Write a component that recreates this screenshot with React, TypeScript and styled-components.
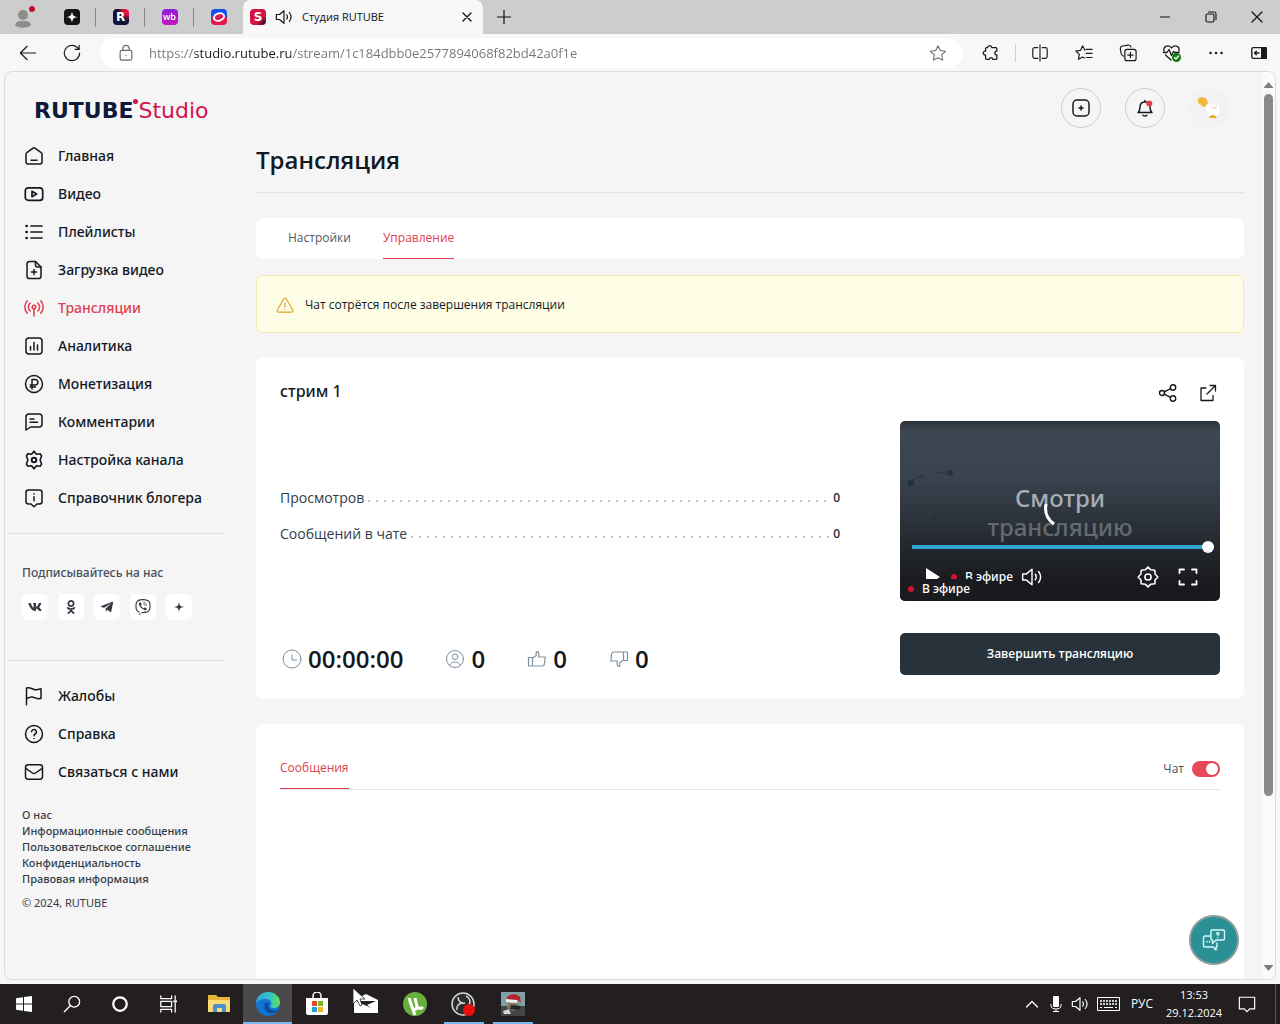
import React from "react";
import styled, { createGlobalStyle, css } from "styled-components";
import { FaVk, FaOdnoklassniki, FaTelegramPlane, FaViber } from "react-icons/fa";

const ui = `"Open Sans", "Noto Sans", sans-serif`;
const medium = `"Noto Sans", "Open Sans", sans-serif`;

const Global = createGlobalStyle`
  * { box-sizing: border-box; }
  body { margin: 0; font-family: ${ui}; color: #14191f; }
  button { border: 0; padding: 0; background: none; font: inherit; color: inherit; cursor: pointer; }
  a { color: inherit; text-decoration: none; }
  ul, h1, h2, p, dl, dd { margin: 0; padding: 0; list-style: none; }
  svg { display: block; flex: none; }
`;

/* ---------- icons ---------- */

type GlyphProps = { size?: number; w?: number; box?: number; children: React.ReactNode };
const Glyph = ({ size = 20, w = 1.5, box = 20, children }: GlyphProps) => (
  <svg width={size} height={size} viewBox={`0 0 ${box} ${box}`} fill="none" stroke="currentColor"
    strokeWidth={w} strokeLinecap="round" strokeLinejoin="round" aria-hidden="true">
    {children}
  </svg>
);

const icons = {
  home: <Glyph><path d="M2 8.200c0-.6.3-1.200.8-1.500L9 2.100c.6-.4 1.400-.4 2 0l6.200 4.600c.5.3.8.900.8 1.500V16a2 2 0 0 1-2 2H4a2 2 0 0 1-2-2z" /><path d="M7 14.200h6" /></Glyph>,
  video: <Glyph w={1.700}><rect x="1.300" y="3.800" width="17.400" height="12.600" rx="3" /><path d="M8 7.300v5.400l4.600-2.700z" /></Glyph>,
  list: <Glyph w={1.700}><path d="M7 4h11M7 10h11M7 16h11" /><g strokeWidth="2.600"><path d="M2.500 4h.2M2.500 10h.2M2.500 16h.2" /></g></Glyph>,
  upload: <Glyph><path d="M11.500 1.500H5.600a2.600 2.600 0 0 0-2.600 2.600v11.800a2.600 2.600 0 0 0 2.600 2.600h8.800a2.600 2.600 0 0 0 2.600-2.600V7z" /><path d="M11.500 1.500V5a2 2 0 0 0 2 2H17M10 9.500v5M7.500 12h5" /></Glyph>,
  stream: <Glyph w={1.500}><circle cx="10" cy="9" r="1.800" /><path d="M10 11v7M6.200 13a5.400 5.400 0 0 1 0-8M13.800 13a5.400 5.400 0 0 0 0-8M3.200 15.200a9.300 9.300 0 0 1 0-12.400M16.800 15.200a9.300 9.300 0 0 0 0-12.400" /></Glyph>,
  chart: <Glyph><rect x="2" y="2" width="16" height="16" rx="3" /><path d="M6.500 10.500V14M10 6.500V14M13.500 9v5" /></Glyph>,
  money: <Glyph><circle cx="10" cy="10" r="8.500" /><path d="M8 15V5.500h3.200a2.700 2.700 0 0 1 0 5.400H6.200M6.200 13h5.300" /></Glyph>,
  comment: <Glyph><path d="M2 18V5a3 3 0 0 1 3-3h10a3 3 0 0 1 3 3v7a3 3 0 0 1-3 3H6.500z" /><path d="M6 7h4M6 10.300h7.500" /></Glyph>,
  gear: <Glyph w={1.600}><path d="M10 1.200l2.400 3 3.900-.4 1.300 2.200-1.500 4 1.500 4-1.300 2.200-3.900-.4-2.400 3-2.400-3-3.900.4L2.400 14l1.500-4-1.500-4 1.300-2.200 3.900.4z" /><circle cx="10" cy="10" r="2.300" strokeWidth="2" /></Glyph>,
  info: <Glyph><path d="M4.500 2h11A2.500 2.500 0 0 1 18 4.500v9a2.500 2.500 0 0 1-2.500 2.500H13l-3 2.800L7 16H4.500A2.500 2.500 0 0 1 2 13.500v-9A2.500 2.500 0 0 1 4.500 2z" /><path d="M10 8.800v4M10 5.700v.2" /></Glyph>,
  flag: <Glyph><path d="M2.500 18.800V2c4-1.600 6.500 2.400 10.200 1.800 1.500-.2 3-.9 4.300-1v9.500c-4 1.800-6.500-1.600-9.500-1.300-2 .2-3.500 1-5 1.600" /></Glyph>,
  help: <Glyph><circle cx="10" cy="10" r="8.500" /><path d="M7.600 7.800a2.400 2.400 0 1 1 3.500 2.200c-.8.400-1.100.9-1.100 1.800M10 14.400v.1" /></Glyph>,
  mail: <Glyph><rect x="1.500" y="2.800" width="17" height="14.400" rx="2.600" /><path d="M1.800 6.300L8.500 11a2.600 2.600 0 0 0 3 0l6.700-4.700" /></Glyph>,
  plusBox: <Glyph><rect x="2" y="2" width="16" height="16" rx="4" /><path d="M10 8v4M8 10h4" /></Glyph>,
  bell: <Glyph><path d="M3 14.500c1.500-1.200 2-2.500 2-5.500 0-3 2-5 5-5s5 2 5 5c0 3 .5 4.300 2 5.500zM8 17.200c1 1.100 3 1.100 4 0M10 4V2.500" /><circle cx="14.300" cy="5.600" r="3" fill="#e0404f" stroke="none" /></Glyph>,
  warn: <Glyph size={18} w={1.300}><path d="M8.700 3L1.500 15.600A1.500 1.500 0 0 0 2.800 18h14.400a1.500 1.500 0 0 0 1.300-2.400L11.300 3a1.500 1.500 0 0 0-2.600 0zM10 8v4.500M10 15v.2" /></Glyph>,
  share: <Glyph w={1.400}><circle cx="4" cy="10" r="2.500" /><circle cx="15" cy="4.500" r="2.700" /><circle cx="15" cy="15.500" r="2.700" /><path d="M6.300 8.900l6.200-3.200M6.300 11.100l6.200 3.200" /></Glyph>,
  external: <Glyph w={1.300}><path d="M8 5H3v12.500h12V12.500M12 2.500h5.500V8M17.500 2.500L9 11" /></Glyph>,
  clock: <Glyph w={1}><circle cx="10" cy="10" r="9" /><path d="M10 6v5h4.500" /></Glyph>,
  person: <Glyph w={1}><circle cx="10" cy="10" r="8.500" /><circle cx="10" cy="7.800" r="2.800" /><path d="M4.500 16.500c1-2.500 3-3.500 5.500-3.500s4.500 1 5.500 3.500" /></Glyph>,
  like: <Glyph w={1.200}><path d="M1.500 8.500h4v8.500h-4zM5.500 9L9.200 6.500V3.500c0-1.300 2.600-1.200 2.600 1V8h6.400l-.7 6.500c-.2 1.700-1 2.500-2.500 2.500H5.500" /></Glyph>,
  dislike: <Glyph w={1.200}><path d="M18.500 11.500h-4V3h4zM14.500 11l-3.700 2.500v3c0 1.300-2.600 1.200-2.600-1V12H1.800l.7-6.500C2.700 3.800 3.500 3 5 3h9.500" /></Glyph>,
};

const SpeakerIcon = ({ size = 18 }: { size?: number }) => (
  <Glyph size={size} w={1.300}><path d="M1.500 7.200H5L10 3v14l-5-4.200H1.500zM13 7.500c1 1.500 1 3.500 0 5M16 5c2.200 3 2.200 7 0 10" /></Glyph>
);

/* ---------- browser window ---------- */

const Screen = styled.div`
  display: flex; flex-direction: column; height: 100vh; overflow: hidden; background: #f7f7f7;
`;
const TabStrip = styled.header`
  display: flex; height: 34px; flex: none; background: #cdcdcd; color: #111;
`;
const ProfileButton = styled.button`
  width: 47px; display: grid; place-items: center;
`;
const PinnedTab = styled.button<{ $last?: boolean }>`
  width: 49px; display: flex; align-items: center; justify-content: center; position: relative;
  &::after { content: ""; position: absolute; right: 0; top: 8px; width: 1px; height: 19px;
    background: ${p => (p.$last ? "transparent" : "#8a8a8a")}; }
`;
const Favicon = styled.span<{ $bg: string }>`
  width: 16px; height: 16px; border-radius: 4px; display: grid; place-items: center; flex: none;
  background: ${p => p.$bg}; color: #fff; font: 700 12px/16px "DejaVu Sans", sans-serif;
`;
const SmallMark = styled.span`font: 600 9px/12px "Open Sans", sans-serif;`;
const ActiveTab = styled.div`
  width: 240px; display: flex; align-items: center; padding: 0 7px 0 7px; gap: 9px;
  background: #f7f7f7; border-radius: 8px 8px 0 0; font: 11px/16px ${ui};
`;
const TabTitle = styled.span`flex: 1; white-space: nowrap;`;
const TabButton = styled.button`width: 18px; height: 18px; display: grid; place-items: center;`;
const NewTab = styled.button`width: 42px; display: grid; place-items: center;`;
const WindowControls = styled.div`margin-left: auto; display: flex;`;
const WindowButton = styled.button`width: 46px; display: grid; place-items: center;`;

const Toolbar = styled.div`
  display: flex; height: 37px; flex: none; align-items: center; color: #1b1b1b; padding-left: 6px;
`;
const ToolButton = styled.button<{ $last?: boolean }>`
  width: ${p => (p.$last ? 42 : 44)}px; height: 32px; display: grid; place-items: center; flex: none;
`;
const Address = styled.label`
  flex: 1; height: 30px; display: flex; align-items: center; gap: 14px; padding: 0 16px 0 17px;
  margin: 0 6px; background: #fff; border-radius: 15px; color: #6b6b6b;
`;
const AddressInput = styled.input`
  flex: 1; min-width: 0; border: 0; padding: 0; outline: 0; font: 13px/20px ${ui}; color: #6f6f6f;
  background: linear-gradient(90deg, #757575 46px, #1b1b1b 46px, #1b1b1b 142px, #757575 142px);
  -webkit-background-clip: text; background-clip: text; -webkit-text-fill-color: transparent;
`;
const ToolDivider = styled.span`width: 1px; height: 18px; background: #d0d0d0; margin: 0 2px;`;

/* ---------- page ---------- */

const Page = styled.div`
  position: relative; flex: 1; min-height: 0; display: flex; margin: 0 4px 4px; overflow: hidden;
  background: #f5f5f6; border: 1px solid #dcdcdc; border-radius: 8px;
`;
const Sidebar = styled.aside`width: 219px; flex: none; padding: 25px 0 0 3px;`;
const Logo = styled.a`
  display: flex; align-items: center; height: 28px; margin: 0 0 12px 26px; color: #10193a;
  font: 700 22px/28px "DejaVu Sans", sans-serif;
`;
const LogoDot = styled.span`
  width: 5px; height: 5px; border-radius: 50%; background: #d3114d; align-self: flex-start; margin-top: 2px;
`;
const LogoStudio = styled.span`font-weight: 400; color: #d3114d;`;
const NavLink = styled.a<{ $active?: boolean }>`
  display: flex; align-items: center; gap: 14px; height: 38px; padding-left: 16px;
  font: 500 14px/20px ${medium}; color: ${p => (p.$active ? "#e0404f" : "#14191f")};
`;
const Section = styled.section`border-top: 1px solid #dedfe1; margin-top: 16px; padding-top: 16px;`;
const Social = styled(Section)`padding: 29px 0 24px 14px; color: #46505c; font: 500 12px/20px ${medium};`;
const SocialRow = styled.div`display: flex; gap: 10px; margin-top: 11px;`;
const SocialLink = styled.a`
  width: 26px; height: 26px; display: grid; place-items: center; background: #fff; border-radius: 5px; color: #333b45;
`;
const Footer = styled.footer`
  padding: 16px 0 0 14px; font: 500 11px/16px ${medium}; color: #333d49; white-space: nowrap;
  a { display: block; }
  p { margin-top: 8px; font-weight: 400; }
`;

const Main = styled.main`flex: 1; min-width: 0; padding: 16px 18px 0 32px;`;
const TopActions = styled.div`display: flex; justify-content: flex-end; gap: 24px; padding-right: 15px;`;
const RoundButton = styled.button<{ $plain?: boolean }>`
  width: 40px; height: 40px; border-radius: 50%; display: grid; place-items: center;
  border: 1px solid ${p => (p.$plain ? "transparent" : "#c9cbce")};
  background: ${p => (p.$plain ? "#f2f2f3" : "transparent")};
`;
const Title = styled.h1`
  margin-top: 16px; padding-bottom: 16px; border-bottom: 1px solid #e2e3e5;
  font-size: 24px; line-height: 32px; font-weight: 600;
`;
const Card = styled.section`background: #fff; border-radius: 8px; margin-top: 24px; padding: 24px;`;
const TabCard = styled.nav`
  display: flex; gap: 32px; background: #fff; border-radius: 8px; height: 41px; margin-top: 25px; padding: 0 32px;
`;
const Tab = styled.button<{ $active?: boolean }>`
  font-size: 12px; line-height: 20px; color: ${p => (p.$active ? "#e0404f" : "#4f5964")};
  border-bottom: 1px solid ${p => (p.$active ? "#e0404f" : "transparent")};
`;
const Alert = styled.p`
  display: flex; align-items: center; gap: 11px; height: 58px; margin-top: 16px; padding: 2px 19px 0;
  background: #fefde6; border: 1px solid #efebb0; border-radius: 6px; font-size: 12px; line-height: 20px;
  svg { color: #dfa32a; }
`;
const CardHead = styled.div`
  display: flex; align-items: center; height: 24px; margin-bottom: 16px;
  h2 { flex: 1; font: 500 16px/20px ${medium}; align-self: flex-start; }
`;
const IconButton = styled.button`width: 20px; height: 20px; display: grid; place-items: center;`;
const HeadActions = styled.div`display: flex; gap: 20px; padding-right: 2px;`;
const StreamGrid = styled.div`display: grid; grid-template-columns: 1fr 320px; gap: 60px;`;
const StreamInfo = styled.div`
  display: flex; flex-direction: column; justify-content: space-between; padding-top: 64px;
`;
const StatList = styled.dl`display: grid; gap: 10px;`;
const StatRow = styled.div`
  display: flex; align-items: center; gap: 3px; font-size: 14px; line-height: 26px; color: #333d49;
  dd { font: 500 12px/26px ${medium}; color: #14191f; }
`;
const Leader = styled.span`
  flex: 1; height: 2px; margin-top: 6px;
  background: repeating-linear-gradient(90deg, transparent 0 1px, #c3c6ca 1px 3px, transparent 3px 8px);
`;
const Counters = styled.div`display: flex; gap: 40px;`;
const Counter = styled.span`
  display: flex; align-items: center; gap: 6px; padding-left: 2px;
  font-size: 24px; line-height: 32px; font-weight: 600;
  svg { color: #8290a0; }
`;
const StreamSide = styled.div`display: grid; gap: 32px;`;
const Player = styled.div`
  position: relative; height: 180px; border-radius: 5px; overflow: hidden; padding: 62px 8px 0;
  background: linear-gradient(#2b3238, #3d4753 6%, #3a444f 30%, #23282e 70%, #191a1d 90%); color: #fff;
`;
const Poster = styled.p`
  text-align: center; font: 500 24px/29px ${medium}; color: #a9aeb6;
  span { display: block; color: #646a72; }
`;
const PosterArt = styled.svg`position: absolute; left: 0; top: 40px;`;
const Spinner = styled.svg`position: absolute; left: 143px; top: 81px;`;
const Progress = styled.input`
  display: block; width: calc(100% - 2px); height: 12px; margin: 0 0 0 4px; appearance: none; background: none;
  &::-webkit-slider-runnable-track { height: 4px; background: #2ca3d3; }
  &::-webkit-slider-thumb { appearance: none; width: 12px; height: 12px; margin-top: -4px; border-radius: 50%; background: #fff; }
`;
const PlayerBar = styled.div`
  display: flex; align-items: center; height: 32px; margin-top: 8px; padding: 0 12px 0 12px;
  font: 500 12px/16px ${medium};
`;
const LiveTag = styled.span`
  display: flex; align-items: center; gap: 8px; white-space: nowrap;
  &::before { content: ""; width: 6px; height: 6px; border-radius: 50%; background: #d3112f; }
`;
const BarButton = styled.button`width: 24px; height: 24px; display: grid; place-items: center;`;
const BarLeft = styled.div`display: flex; align-items: center; gap: 7px; flex: 1;`;
const BarRight = styled.div`display: flex; gap: 16px;`;
const LiveBadge = styled.div`
  position: absolute; left: 0; bottom: 0; width: 74px; height: 22px; padding: 1px 0 0 8px;
  background: #1b1c20; font: 500 12px/18px ${medium};
`;
const FinishButton = styled.button`
  height: 42px; border-radius: 5px; background: #28323b; color: #fff; font-size: 12px; line-height: 20px; font-weight: 600;
`;
const ChatCard = styled(Card)`height: 400px; margin-top: 25px;`;
const ChatHead = styled.div`
  display: flex; justify-content: space-between; height: 42px; border-bottom: 1px solid #e4e6e8;
  ${Tab} { height: 41px; }
`;
const Switch = styled.label`
  display: flex; align-items: center; gap: 8px; font-size: 12px; line-height: 20px; color: #46505c;
  input { appearance: none; width: 28px; height: 16px; margin: 0; border-radius: 8px; background: #e8475a; position: relative; }
  input::after { content: ""; position: absolute; right: 2px; top: 2px; width: 12px; height: 12px; border-radius: 50%; background: #fff; }
`;
const Scrollbar = styled.div`
  width: 13px; flex: none; background: #fafafa; display: flex; flex-direction: column; align-items: center; padding: 10px 0 8px;
`;
const ScrollThumb = styled.span`width: 9px; height: 79%; margin-top: 6px; border-radius: 5px; background: #8a8a8a;`;
const Caret = styled.span<{ $down?: boolean }>`
  width: 10px; height: 6px; background: #7d7d7d; margin-top: ${p => (p.$down ? "auto" : "0")};
  clip-path: ${p => (p.$down ? "polygon(0 0, 100% 0, 50% 100%)" : "polygon(0 100%, 100% 100%, 50% 0)")};
`;
const HelpBubble = styled.button`
  position: absolute; right: 36px; bottom: 14px; width: 50px; height: 50px; border-radius: 50%;
  display: grid; place-items: center; background: #2b8f96; border: 2px solid #8d9a9c; color: #d5fbfa;
`;

/* ---------- taskbar ---------- */

const Taskbar = styled.footer`
  display: flex; height: 40px; flex: none; background: #231f20; color: #fff; font: 12px/18px ${ui};
`;
const TaskButton = styled.button<{ $app?: boolean; $open?: boolean; $focus?: boolean }>`
  position: relative; width: ${p => (p.$app ? 49 : 48)}px; display: grid; place-items: center;
  ${p => p.$focus && css`background: #4b4849;`}
  ${p => p.$open && css`
    &::after { content: ""; position: absolute; bottom: 0; height: 2px; background: #76b9ed;
      left: ${p.$focus ? 0 : 5}px; right: ${p.$focus ? 0 : 4}px; }
  `}
`;
const Apps = styled.div`display: flex; margin-left: 2px;`;
const Pointer = styled.svg`position: absolute; left: 11px; top: 3px;`;
const Tray = styled.div`margin-left: auto; display: flex; align-items: center;`;
const TrayButton = styled.button<{ $w?: number }>`
  width: ${p => p.$w ?? 24}px; height: 40px; display: grid; place-items: center; text-align: center;
`;
const Clock = styled.time`font-size: 11px; line-height: 18px;`;
const ShowDesktop = styled.button`width: 5px; height: 40px; border-left: 1px solid #5b5859;`;

const nav: [keyof typeof icons, string][] = [
  ["home", "Главная"], ["video", "Видео"], ["list", "Плейлисты"], ["upload", "Загрузка видео"],
  ["stream", "Трансляции"], ["chart", "Аналитика"], ["money", "Монетизация"], ["comment", "Комментарии"],
  ["gear", "Настройка канала"], ["info", "Справочник блогера"],
];
const support: [keyof typeof icons, string][] = [["flag", "Жалобы"], ["help", "Справка"], ["mail", "Связаться с нами"]];
const legal = ["О нас", "Информационные сообщения", "Пользовательское соглашение", "Конфиденциальность", "Правовая информация"];
const stats = [["Просмотров", "0"], ["Сообщений в чате", "0"]];
const counters: [keyof typeof icons, string, string][] = [
  ["clock", "00:00:00", "Длительность"], ["person", "0", "Зрители"], ["like", "0", "Нравится"], ["dislike", "0", "Не нравится"],
];

const Spark = ({ size, color }: { size: number; color: string }) => (
  <svg width={size} height={size} viewBox="0 0 16 16" aria-hidden="true">
    <path d="M8 1c.5 5 2 6.500 7 7-5 .5-6.500 2-7 7-.5-5-2-6.500-7-7 5-.5 6.500-2 7-7z" fill={color} />
  </svg>
);

const BrowserChrome = () => (
  <>
    <TabStrip>
      <ProfileButton aria-label="Профиль">
        <svg width="26" height="26" viewBox="0 0 26 26">
          <circle cx="12" cy="11" r="5" fill="#8c8c88" />
          <path d="M4 21c1-4 4-4 8-4s7 0 8 4c-3 3.500-13 3.500-16 0z" fill="#8c8c88" />
          <circle cx="21" cy="5" r="3" fill="#c30f2c" />
        </svg>
      </ProfileButton>
      <PinnedTab aria-label="Дзен"><Favicon $bg="#151515"><Spark size={14} color="#fff" /></Favicon></PinnedTab>
      <PinnedTab aria-label="RUTUBE"><Favicon $bg="radial-gradient(circle at 100% 0, #e5143f 0 25%, #11143a 50%)">R</Favicon></PinnedTab>
      <PinnedTab aria-label="Wildberries"><Favicon $bg="linear-gradient(#8a1fd6, #c415c0)"><SmallMark>wb</SmallMark></Favicon></PinnedTab>
      <PinnedTab $last aria-label="Ozon">
        <Favicon $bg="linear-gradient(#1750e8 40%, #e3164d 60%)">
          <svg width="16" height="16" viewBox="0 0 16 16"><ellipse cx="8" cy="8" rx="5.200" ry="3.600" transform="rotate(-20 8 8)" fill="#d81a55" stroke="#fff" strokeWidth="2" /></svg>
        </Favicon>
      </PinnedTab>
      <ActiveTab>
        <Favicon $bg="radial-gradient(circle at 100% 100%, #3b0d2e 0 10%, #d8123f 40%)">S</Favicon>
        <TabButton aria-label="Отключить звук"><SpeakerIcon /></TabButton>
        <TabTitle>Студия RUTUBE</TabTitle>
        <TabButton aria-label="Закрыть вкладку"><Glyph size={10} box={10} w={1.400}><path d="M1 1l8 8M9 1L1 9" /></Glyph></TabButton>
      </ActiveTab>
      <NewTab aria-label="Новая вкладка"><Glyph size={14} box={14} w={1.200}><path d="M7 0v14M0 7h14" /></Glyph></NewTab>
      <WindowControls>
        <WindowButton aria-label="Свернуть"><Glyph size={10} box={10} w={1.200}><path d="M0 5h10" /></Glyph></WindowButton>
        <WindowButton aria-label="Развернуть"><Glyph size={12} box={12} w={1.100}><rect x="1" y="3" width="8" height="8" rx="1.500" /><path d="M3.500 1H9a2 2 0 0 1 2 2v5.500" /></Glyph></WindowButton>
        <WindowButton aria-label="Закрыть"><Glyph size={12} box={12} w={1.200}><path d="M1 1l10 10M11 1L1 11" /></Glyph></WindowButton>
      </WindowControls>
    </TabStrip>
    <Toolbar>
      <ToolButton aria-label="Назад"><Glyph size={18} w={1.300}><path d="M18.500 10h-17M9 2.500L1.500 10 9 17.500" /></Glyph></ToolButton>
      <ToolButton aria-label="Обновить"><Glyph size={18} w={1.300}><path d="M18.500 10A8.500 8.500 0 1 1 15.600 3.600L18 6M18 1.500V6h-4.500" /></Glyph></ToolButton>
      <Address>
        <Glyph size={18} w={1.300}><rect x="3.500" y="7" width="13" height="11" rx="1.800" /><path d="M6.500 7V5a3.500 3.500 0 0 1 7 0v2M10 12.500v.2" /></Glyph>
        <AddressInput aria-label="Адрес" defaultValue="https://studio.rutube.ru/stream/1c184dbb0e2577894068f82bd42a0f1e" />
        <Glyph size={18} w={1.200}><path d="M10 2l2.500 5.300 5.800.8-4.200 4 1 5.800L10 15.200l-5.100 2.700 1-5.800-4.200-4 5.800-.8z" /></Glyph>
      </Address>
      <ToolButton aria-label="Расширения"><Glyph size={18} w={1.400}><path d="M6 4c.5-3 4.500-3 5 0h4.500a1 1 0 0 1 1 1v3c-3-.3-3 4.500 0 4.200V16a1 1 0 0 1-1 1H12c-.5-2.500-3.500-2.500-4 0H5a1 1 0 0 1-1-1v-3.500c-3.500-.3-3.500-4.500 0-4.500V5a1 1 0 0 1 1-1z" /></Glyph></ToolButton>
      <ToolDivider />
      <ToolButton aria-label="Разделить экран"><Glyph size={18} w={1.300}><path d="M10 1v18M7.500 4H4a2 2 0 0 0-2 2v8a2 2 0 0 0 2 2h3.500M12.500 4H16a2 2 0 0 1 2 2v8a2 2 0 0 1-2 2h-3.500" /></Glyph></ToolButton>
      <ToolButton aria-label="Избранное"><Glyph size={18} w={1.300}><path d="M11 7L8.500 2 6.200 7l-5.200.8 3.800 3.700-1 5.500 4.700-2.500 2 1M12.500 6H19M12.500 10.500H19M12.500 15H19" /></Glyph></ToolButton>
      <ToolButton aria-label="Коллекции"><Glyph size={18} w={1.300}><path d="M5 13.500C3 13 2.500 12 2.200 10L1.500 5.500c-.3-2 .7-3 2.500-3.300l6-1c2-.3 3 .8 3.300 2.300" /><rect x="6.500" y="6" width="12.500" height="12.500" rx="2.500" /><path d="M12.700 9.300v6M9.700 12.300h6" /></Glyph></ToolButton>
      <ToolButton aria-label="Производительность"><Glyph size={20} w={1.300}><path d="M2 8c-1-5 5-7 7.500-3C12 1 18 3 17 8M1.500 9.500H5l2-3 2.500 6 2-4 1 1H17M3.500 12l5.500 5" /><circle cx="14.500" cy="14.500" r="4.500" fill="#107c10" stroke="none" /><path d="M12.500 14.500l1.500 1.500 2.500-3" stroke="#fff" /></Glyph></ToolButton>
      <ToolButton aria-label="Меню"><Glyph size={16} box={16} w={2.400}><path d="M2.500 8h.1M8 8h.1M13.500 8h.1" /></Glyph></ToolButton>
      <ToolButton $last aria-label="Боковая панель"><Glyph size={18} w={1.500}><rect x="2" y="4" width="16" height="12" rx="1.500" /><path d="M13 4h5v12h-5z" fill="currentColor" /><path d="M5 10h5M7 8l-2 2 2 2" /></Glyph></ToolButton>
    </Toolbar>
  </>
);

const SideMenu = () => (
  <Sidebar>
    <Logo href="#">RUTUBE<LogoDot /><LogoStudio>Studio</LogoStudio></Logo>
    <nav>{nav.map(([icon, text]) => <NavLink key={text} href="#" $active={icon === "stream"}>{icons[icon]}{text}</NavLink>)}</nav>
    <Social>
      <p>Подписывайтесь на нас</p>
      <SocialRow>
        <SocialLink href="#" aria-label="ВКонтакте"><FaVk size={14} /></SocialLink>
        <SocialLink href="#" aria-label="Одноклассники"><FaOdnoklassniki size={14} /></SocialLink>
        <SocialLink href="#" aria-label="Telegram"><FaTelegramPlane size={14} /></SocialLink>
        <SocialLink href="#" aria-label="Viber"><FaViber size={16} /></SocialLink>
        <SocialLink href="#" aria-label="Дзен"><Spark size={12} color="#333b45" /></SocialLink>
      </SocialRow>
    </Social>
    <Section as="nav">{support.map(([icon, text]) => <NavLink key={text} href="#">{icons[icon]}{text}</NavLink>)}</Section>
    <Footer>
      {legal.map(text => <a key={text} href="#">{text}</a>)}
      <p>© 2024, RUTUBE</p>
    </Footer>
  </Sidebar>
);

const StreamPlayer = () => (
  <Player>
    <PosterArt width="80" height="60" viewBox="0 0 80 60" fill="none" stroke="#28303c">
      <path d="M11 21c4-4 8-5 14-6M37 11l12 2" />
      <g fill="#28303c"><circle cx="11" cy="22" r="3" /><circle cx="50" cy="12" r="2.500" /><circle cx="34" cy="56" r="2" /></g>
    </PosterArt>
    <Poster>Смотри<span>трансляцию</span></Poster>
    <Spinner width="14" height="24" viewBox="0 0 14 24" fill="none" stroke="#fff" strokeWidth="3"><path d="M3 2c-1.500 8 1 15 8 20" /></Spinner>
    <Progress type="range" aria-label="Позиция" defaultValue={100} />
    <PlayerBar>
      <BarLeft>
        <BarButton aria-label="Воспроизвести"><svg width="16" height="18" viewBox="0 0 16 18"><path d="M2 0l14 9-14 9z" fill="#fff" /></svg></BarButton>
        <LiveTag>В эфире</LiveTag>
        <BarButton aria-label="Громкость"><SpeakerIcon size={22} /></BarButton>
      </BarLeft>
      <BarRight>
        <BarButton aria-label="Настройки"><Glyph size={22} w={1.400}><path d="M10 1l2.500 2.500 3.700.3.300 3.700L19 10l-2.500 2.500-.3 3.700-3.700.3L10 19l-2.500-2.500-3.700-.3-.3-3.700L1 10l2.500-2.500.3-3.700 3.700-.3z" /><circle cx="10" cy="10" r="2.800" /></Glyph></BarButton>
        <BarButton aria-label="Во весь экран"><Glyph size={20} w={1.800}><path d="M1.500 6V2.500H6M14 2.500h4.500V6M18.500 14v3.500H14M6 17.500H1.500V14" /></Glyph></BarButton>
      </BarRight>
    </PlayerBar>
    <LiveBadge><LiveTag>В эфире</LiveTag></LiveBadge>
  </Player>
);

const Content = () => (
  <Main>
    <TopActions>
      <RoundButton aria-label="Создать">{icons.plusBox}</RoundButton>
      <RoundButton aria-label="Уведомления">{icons.bell}</RoundButton>
      <RoundButton $plain aria-label="Аккаунт">
        <svg width="26" height="24" viewBox="0 0 26 24">
          <path d="M10 8h4l9 2v8l-4 2h-6l-3-5z" fill="#fff" />
          <path d="M2 3c2-3 8-2 9 1l1 3-3 4c-3 0-4-3-7-4z" fill="#f4b83a" />
          <path d="M13 22c1-4 6-4 8 0z" fill="#eda92a" />
          <path d="M16 12h5" stroke="#fbd9d5" strokeWidth="2" />
        </svg>
      </RoundButton>
    </TopActions>
    <Title>Трансляция</Title>
    <TabCard><Tab>Настройки</Tab><Tab $active>Управление</Tab></TabCard>
    <Alert>{icons.warn}Чат сотрётся после завершения трансляции</Alert>
    <Card>
      <CardHead>
        <h2>стрим 1</h2>
        <HeadActions>
          <IconButton aria-label="Поделиться">{icons.share}</IconButton>
          <IconButton aria-label="Открыть">{icons.external}</IconButton>
        </HeadActions>
      </CardHead>
      <StreamGrid>
        <StreamInfo>
          <StatList>
            {stats.map(([name, value]) => <StatRow key={name}><dt>{name}</dt><Leader /><dd>{value}</dd></StatRow>)}
          </StatList>
          <Counters>{counters.map(([icon, value, label]) => <Counter key={icon} title={label}>{icons[icon]}{value}</Counter>)}</Counters>
        </StreamInfo>
        <StreamSide>
          <StreamPlayer />
          <FinishButton>Завершить трансляцию</FinishButton>
        </StreamSide>
      </StreamGrid>
    </Card>
    <ChatCard>
      <ChatHead>
        <Tab $active>Сообщения</Tab>
        <Switch>Чат<input type="checkbox" role="switch" defaultChecked /></Switch>
      </ChatHead>
    </ChatCard>
  </Main>
);

const SystemBar = () => (
  <Taskbar>
    <TaskButton aria-label="Пуск"><svg width="16" height="16" viewBox="0 0 16 16" fill="#fff"><path d="M0 2.200L7 1.200v6.300H0zM8 1l8-1v7.500H8zM0 8.500h7v6.300l-7-1zM8 8.500h8V16l-8-1.100z" /></svg></TaskButton>
    <TaskButton aria-label="Поиск"><Glyph size={18} w={1.500}><circle cx="12.500" cy="7.500" r="6" /><path d="M8 12l-6.500 6.500" /></Glyph></TaskButton>
    <TaskButton aria-label="Cortana"><Glyph size={18} w={2.500}><circle cx="10" cy="10" r="7.500" /></Glyph></TaskButton>
    <TaskButton aria-label="Просмотр задач"><Glyph size={18} w={1.400}><path d="M2 1v3h12V1M2 19v-3h12v3M2 7h12v6H2zM18 1v4M18 9v10" /><path d="M17 7h2" strokeWidth="2.500" /></Glyph></TaskButton>
    <Apps>
      <TaskButton $app aria-label="Проводник">
        <svg width="22" height="20" viewBox="0 0 22 20"><path d="M0 1h8l2 2h12v15H0z" fill="#e8b53c" /><path d="M0 6h22v12H0z" fill="#fadb74" /><path d="M5 18v-6a2 2 0 0 1 2-2h9a2 2 0 0 1 2 2v6h-4v-4H9v4z" fill="#4a90cf" /></svg>
      </TaskButton>
      <TaskButton $app $open $focus aria-label="Microsoft Edge">
        <svg width="26" height="26" viewBox="0 0 26 26">
          <defs><linearGradient id="edgeTop" x1="0" x2="1"><stop offset="0" stopColor="#2aa4e0" /><stop offset=".6" stopColor="#35c6c0" /><stop offset="1" stopColor="#66df52" /></linearGradient></defs>
          <circle cx="13" cy="13" r="12" fill="#1474cf" />
          <path d="M1 13C1 6 6 1 13 1s12 5 12 10c0 4-3 6-6 6-4 0-4-1.500-3-3 1-2-.5-6-5-6-5 0-9 2-10 5z" fill="url(#edgeTop)" />
          <path d="M10 13c-2 5 2 10 8 9 2 0 4-1.500 5-3-6 2-11-1-9.500-5.500-.5-3-3-2-3.500-.5z" fill="#0c4a99" />
        </svg>
      </TaskButton>
      <TaskButton $app aria-label="Microsoft Store">
        <svg width="24" height="24" viewBox="0 0 24 24"><path d="M8 7V4a4 4 0 0 1 8 0v3" fill="none" stroke="#fff" strokeWidth="1.500" /><path d="M1 6h22v15a2 2 0 0 1-2 2H3a2 2 0 0 1-2-2z" fill="#fff" /><path d="M7 9h5v5H7z" fill="#e14b2b" /><path d="M13 9h5v5h-5z" fill="#7db722" /><path d="M7 15h5v5H7z" fill="#22a0e0" /><path d="M13 15h5v5h-5z" fill="#f3b21b" /></svg>
      </TaskButton>
      <TaskButton $app aria-label="Почта">
        <svg width="24" height="20" viewBox="0 0 24 20"><path d="M0 6L12 0l12 6v13H0z" fill="#fff" /><path d="M2 7h20l-9 4 4 3z" fill="#231f20" /></svg>
        <Pointer width="14" height="20" viewBox="0 0 14 20"><path d="M1 1v16l4-4 3 6 2-1-2-6h5z" fill="#fff" stroke="#231f20" strokeWidth=".8" /></Pointer>
      </TaskButton>
      <TaskButton $app aria-label="uTorrent">
        <svg width="24" height="24" viewBox="0 0 24 24"><circle cx="12" cy="12" r="12" fill="#68b03c" /><path d="M6 6l3 9c1 3.500 5 3 5-.5L12 6M14 14c1 3 4 3 6 1" fill="none" stroke="#fff" strokeWidth="3" /><path d="M9 15l3 8" stroke="#fff" strokeWidth="3" /></svg>
      </TaskButton>
      <TaskButton $app $open aria-label="OBS Studio">
        <svg width="25" height="25" viewBox="0 0 25 25"><circle cx="12" cy="12" r="11" fill="#2c2a2b" stroke="#d5d5d5" strokeWidth="1.500" /><path d="M7 5c0 4 3 7 7 6M12 11c-4 0-7 3-6 7M15 4c4 2 5 6 3 9" fill="none" stroke="#d5d5d5" strokeWidth="1.500" /><circle cx="18" cy="18" r="6" fill="#e8100d" /></svg>
      </TaskButton>
      <TaskButton $app $open aria-label="Игра">
        <svg width="24" height="24" viewBox="0 0 24 24"><path d="M0 0h24v24H0z" fill="#7fa0a6" /><path d="M0 14h24v10H0z" fill="#454543" /><path d="M5 8c1-6 10-8 14-3l1 6-3-3z" fill="#b8222c" /><path d="M5 7l11 1v3L5 10z" fill="#f1eeee" /><path d="M7 11h9l3 5-7 3-6-3z" fill="#8a755f" /><path d="M10 13l10 1-2 4-9-1z" fill="#23282a" /><path d="M2 19l6-2 2 5H3z" fill="#d4d6d2" /></svg>
      </TaskButton>
    </Apps>
    <Tray>
      <TrayButton aria-label="Скрытые значки"><Glyph size={14} box={14} w={1.300}><path d="M1.500 10L7 4.500l5.500 5.500" /></Glyph></TrayButton>
      <TrayButton aria-label="Микрофон"><svg width="12" height="16" viewBox="0 0 12 16"><rect x="3" y="0" width="6" height="11" rx="1" fill="#fff" /><path d="M1 8v2c0 4 10 4 10 0V8M6 13v2M3 15.500h6" fill="none" stroke="#fff" /></svg></TrayButton>
      <TrayButton aria-label="Громкость"><SpeakerIcon /></TrayButton>
      <TrayButton $w={32} aria-label="Клавиатура"><svg width="23" height="14" viewBox="0 0 23 14" fill="none" stroke="#fff"><path d="M.5.5h22v13H.5z" /><path d="M3 4h17M3 7h17" strokeDasharray="2 1" strokeWidth="1.500" /><path d="M3 10.500h2M7 10.500h9M18 10.500h2" /></svg></TrayButton>
      <TrayButton $w={36}>РУС</TrayButton>
      <TrayButton $w={68}><Clock>13:53<br />29.12.2024</Clock></TrayButton>
      <TrayButton $w={38} aria-label="Уведомления"><Glyph size={18} w={1.300}><path d="M1.500 2.500h17v13H13l-3 3-3-3H1.500z" strokeLinejoin="miter" /></Glyph></TrayButton>
      <TrayButton as="span" $w={9} />
      <ShowDesktop aria-label="Показать рабочий стол" />
    </Tray>
  </Taskbar>
);

export default function App() {
  return (
    <>
      <Global />
      <Screen>
        <BrowserChrome />
        <Page>
          <SideMenu />
          <Content />
          <Scrollbar aria-hidden="true"><Caret /><ScrollThumb /><Caret $down /></Scrollbar>
          <HelpBubble aria-label="Помощь">
            <Glyph size={24} box={24} w={1.400}><path d="M10 2h11a1.500 1.500 0 0 1 1.500 1.500v7A1.500 1.500 0 0 1 21 12h-7l-3.500 3.500V12H10a1 1 0 0 1-1-1V3a1 1 0 0 1 1-1zM9 8H3a1.500 1.500 0 0 0-1.500 1.500v8A1.500 1.500 0 0 0 3 19h8l3 3v-3h1v-4M5 13.500v.5M7.500 13.500v.5" /><path d="M14.500 5.800c.3-1.600 2.600-1.300 2.400.1-.1.800-1.200.9-1.200 1.700M15.700 9.500v.1" /></Glyph>
          </HelpBubble>
        </Page>
        <SystemBar />
      </Screen>
    </>
  );
}
